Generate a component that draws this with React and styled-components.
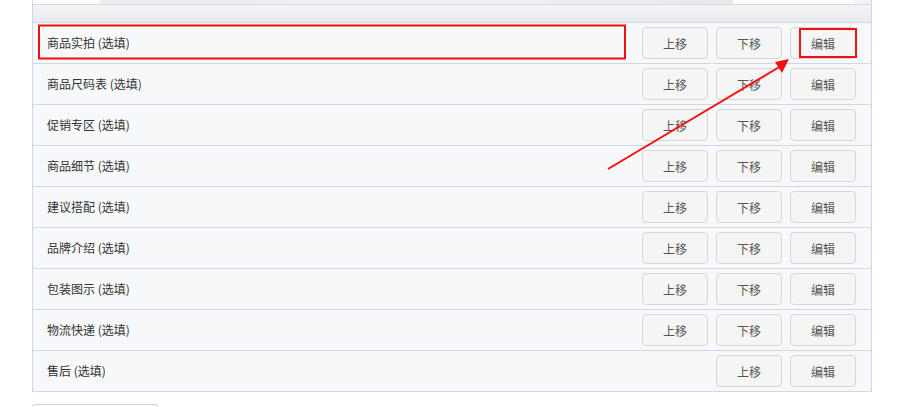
import React from 'react'
import styled, { createGlobalStyle } from 'styled-components'

const rows = [
  { name: '商品实拍', up: true, down: true },
  { name: '商品尺码表', up: true, down: true },
  { name: '促销专区', up: true, down: true },
  { name: '商品细节', up: true, down: true },
  { name: '建议搭配', up: true, down: true },
  { name: '品牌介绍', up: true, down: true },
  { name: '包装图示', up: true, down: true },
  { name: '物流快递', up: true, down: true },
  { name: '售后', up: true, down: false },
]

function App() {
  return (
    <>
      <Global />
      <Page>
        <Panel>
          <TopStrip>
            <WhiteBlock w={67} />
            <ImageBlock />
            <WhiteBlock w={121} />
          </TopStrip>
          <Header />
          {rows.map((r) => (
            <Row key={r.name}>
              <Label>{r.name} (选填)</Label>
              <Actions>
                {r.up && <Btn>上移</Btn>}
                {r.down && <Btn>下移</Btn>}
                <Btn>编辑</Btn>
              </Actions>
            </Row>
          ))}
        </Panel>
        <BottomBtn />
        <Overlay viewBox="0 0 897 407">
          <rect x="39" y="25.5" width="586" height="33" fill="none" stroke="#f01010" strokeWidth="2" />
          <rect x="800" y="29" width="56" height="28" fill="none" stroke="#f01010" strokeWidth="2" />
          <line x1="608" y1="169" x2="781" y2="66" stroke="#f01010" strokeWidth="2" />
          <polygon points="789,59 775,62 782,73" fill="#f01010" />
        </Overlay>
      </Page>
    </>
  )
}

export default App

const Global = createGlobalStyle`
  html, body {
    margin: 0;
    padding: 0;
    overflow: hidden;
    background: #fff;
  }
  body {
    font-family: "Noto Sans CJK SC", "Noto Sans", sans-serif;
  }
`

const Page = styled.div`
  position: relative;
  width: 897px;
  height: 407px;
  overflow: hidden;
  padding-left: 32px;
  box-sizing: border-box;
`

const Panel = styled.div`
  width: 840px;
  box-sizing: border-box;
  border-left: 1px solid #d0d7e5;
  border-right: 1px solid #d0d7e5;
  border-bottom: 1px solid #d0d7e5;
  background: #f7f8fa;
`

const TopStrip = styled.div`
  display: flex;
  height: 4px;
  background: #f3f4f6;
`

const WhiteBlock = styled.div`
  width: ${(p) => p.w}px;
  background: #fff;
`

const ImageBlock = styled.div`
  width: 633px;
  background: linear-gradient(90deg, #ededed, #f1f1f1 60%, #e9e9e9);
`

const Header = styled.div`
  height: 17px;
  border-top: 1px solid #d0d7e5;
  border-bottom: 1px solid #d0d7e5;
  background: linear-gradient(#f3f4f6, #e9ebee);
`

const Row = styled.div`
  display: flex;
  align-items: center;
  justify-content: space-between;
  height: 40px;
  padding: 0 15px 0 14px;
  border-bottom: 1px solid #d0d7e5;
  &:last-child {
    border-bottom: none;
  }
`

const Label = styled.span`
  font-size: 12px;
  line-height: 16px;
  margin-top: -1px;
  color: #333;
`

const Actions = styled.div`
  display: flex;
  gap: 8px;
`

const Btn = styled.button`
  width: 66px;
  height: 32px;
  box-sizing: border-box;
  border: 1px solid #d6d6d6;
  border-radius: 4px;
  background: #f5f5f5;
  color: #555;
  font-family: "Noto Sans CJK SC", sans-serif;
  font-size: 12px;
  padding: 0;
  cursor: pointer;
`

const BottomBtn = styled.div`
  margin-top: 12px;
  width: 126px;
  height: 30px;
  box-sizing: border-box;
  border: 1px solid #cfcfcf;
  border-radius: 3px;
  background: #fff;
`

const Overlay = styled.svg`
  position: absolute;
  top: 0;
  left: 0;
  width: 897px;
  height: 407px;
  pointer-events: none;
`
